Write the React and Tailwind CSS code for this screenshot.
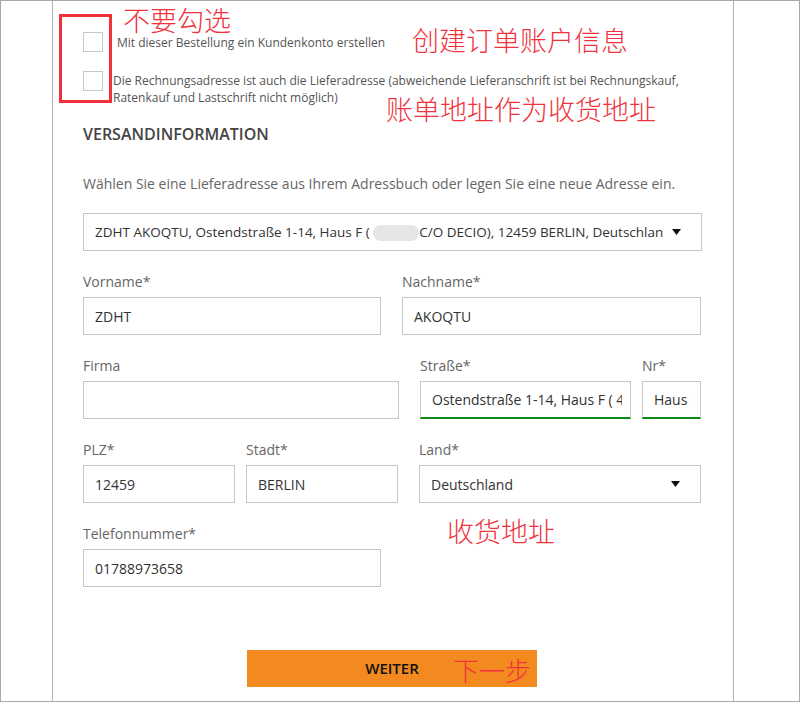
import React from 'react';

const font = { fontFamily: '"Open Sans", "Liberation Sans", sans-serif' };

function Caret() {
  return (
    <svg width="9" height="6" viewBox="0 0 9 6" className="shrink-0">
      <path d="M0 0 H9 L4.5 6 Z" fill="#111" />
    </svg>
  );
}

function Field({ label, value, width, valid }) {
  return (
    <div className={`flex flex-col ${width}`}>
      <label className="h-5 leading-5 text-[14px] text-[#666] mb-[5px] whitespace-nowrap">{label}</label>
      <div
        className={`h-[38px] border border-[#c6c6c6] pl-[11px] pr-[8px] flex items-center text-[14px] text-[#333] ${
          valid ? 'border-b-2 border-b-[#0d8a16]' : ''
        }`}
      >
        <span className="block w-full overflow-hidden whitespace-nowrap">{value}</span>
      </div>
    </div>
  );
}

function SelectField({ label, value, width }) {
  return (
    <div className={`flex flex-col ${width}`}>
      <label className="h-5 leading-5 text-[14px] text-[#666] mb-[5px]">{label}</label>
      <div className="h-[38px] border border-[#c6c6c6] pl-[11px] pr-[20px] flex items-center justify-between text-[14px] text-[#333]">
        <span>{value}</span>
        <Caret />
      </div>
    </div>
  );
}

const cjk = '"Noto Sans CJK SC", sans-serif';

export default function App() {
  return (
    <div
      className="relative w-[800px] h-[702px] border border-[#a8a8a8] bg-white flex overflow-hidden"
      style={font}
    >
      {/* left gutter */}
      <div className="w-[52px] shrink-0 border-r border-[#b4b4b4]" />

      {/* main form */}
      <div className="w-[681px] shrink-0 border-r border-[#b4b4b4] pl-[30px] pr-[31px] pt-[31px]">
        <div className="flex items-center">
          <div className="w-5 h-5 border border-[#c8c8c8] shrink-0" />
          <span className="ml-[14px] text-[12px] text-[#555] leading-[17px]">
            Mit dieser Bestellung ein Kundenkonto erstellen
          </span>
        </div>

        <div className="flex items-start mt-[19px]">
          <div className="w-5 h-5 border border-[#c8c8c8] shrink-0" />
          <span className="ml-[10px] text-[12px] text-[#555] leading-[17px] pt-[1px] whitespace-nowrap">
            Die Rechnungsadresse ist auch die Lieferadresse (abweichende Lieferanschrift ist bei Rechnungskauf,
            <br />
            Ratenkauf und Lastschrift nicht möglich)
          </span>
        </div>

        <h3 className="mt-[18px] h-5 leading-5 text-[16px] font-semibold text-[#444]">VERSANDINFORMATION</h3>

        <p className="mt-[30px] h-5 leading-5 text-[14px] text-[#666]">
          Wählen Sie eine Lieferadresse aus Ihrem Adressbuch oder legen Sie eine neue Adresse ein.
        </p>

        <div className="mt-[19px] h-[38px] border border-[#c6c6c6] pl-[11px] pr-[20px] flex items-center text-[13.5px] text-[#333]">
          <span className="flex-1 overflow-hidden whitespace-nowrap mr-[9px]">
            ZDHT AKOQTU, Ostendstraße 1-14, Haus F ({' '}
            <span className="inline-block align-middle w-[46px] h-[16px] rounded-full bg-[#e6e6e6]" />
            C/O DECIO), 12459 BERLIN, Deutschland
          </span>
          <Caret />
        </div>

        <div className="mt-[21px] flex gap-[21px]">
          <Field label="Vorname*" value="ZDHT" width="w-[298px]" />
          <Field label="Nachname*" value="AKOQTU" width="w-[299px]" />
        </div>

        <div className="mt-[21px] flex">
          <Field label="Firma" value="" width="w-[316px]" />
          <div className="ml-[21px]">
            <Field label="Straße*" value="Ostendstraße 1-14, Haus F ( 49" width="w-[211px]" valid />
          </div>
          <div className="ml-[11px]">
            <Field label="Nr*" value="Haus F" width="w-[59px]" valid />
          </div>
        </div>

        <div className="mt-[21px] flex">
          <Field label="PLZ*" value="12459" width="w-[152px]" />
          <div className="ml-[11px]">
            <Field label="Stadt*" value="BERLIN" width="w-[152px]" />
          </div>
          <div className="ml-[21px]">
            <SelectField label="Land*" value="Deutschland" width="w-[282px]" />
          </div>
        </div>

        <div className="mt-[21px] flex">
          <Field label="Telefonnummer*" value="01788973658" width="w-[298px]" />
        </div>

        <div className="mt-[63px] flex">
          <button className="ml-[164px] w-[290px] h-[37px] bg-[#f38a20] text-[15px] font-semibold text-[#111]">
            WEITER
          </button>
        </div>
      </div>

      <div className="flex-1" />

      {/* annotations */}
      <div className="absolute left-[58px] top-[13px] w-[53px] h-[89px] border-[3px] border-[#f2303a]" />
      <span className="absolute left-[122px] top-[4px] text-[27px] leading-[30px] font-light text-[#f0323c]" style={{ fontFamily: cjk }}>
        不要勾选
      </span>
      <span className="absolute left-[411px] top-[24px] text-[27px] leading-[30px] font-light text-[#f0323c]" style={{ fontFamily: cjk }}>
        创建订单账户信息
      </span>
      <span className="absolute left-[385px] top-[93px] text-[27px] leading-[30px] font-light text-[#f0323c]" style={{ fontFamily: cjk }}>
        账单地址作为收货地址
      </span>
      <span className="absolute left-[446px] top-[515px] text-[27px] leading-[30px] font-light text-[#f0323c]" style={{ fontFamily: cjk }}>
        收货地址
      </span>
      <span className="absolute left-[452px] top-[654px] text-[26px] leading-[30px] font-light text-[#f0323c]" style={{ fontFamily: cjk }}>
        下一步
      </span>
    </div>
  );
}
